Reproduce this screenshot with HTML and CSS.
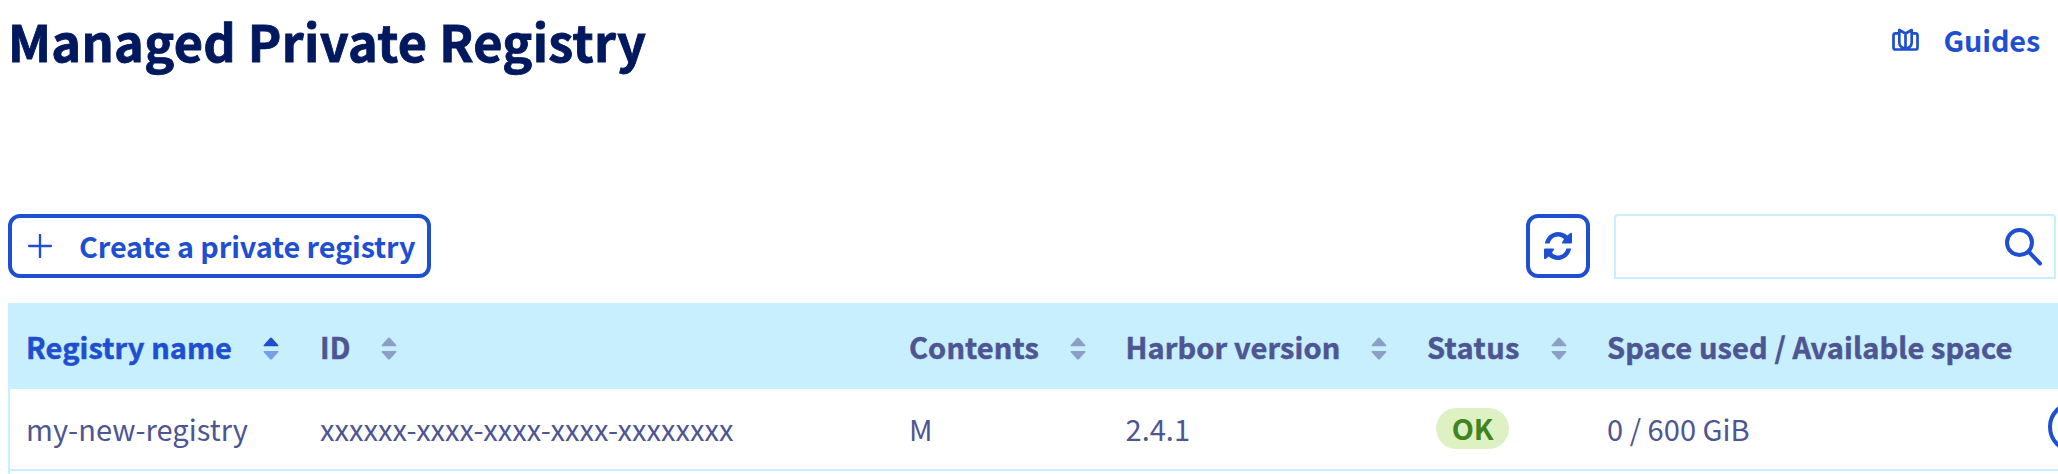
FILE: index.html
```html
<!DOCTYPE html>
<html lang="en">
<head>
<meta charset="utf-8">
<title>Managed Private Registry</title>
<link rel="stylesheet" href="styles.css">
</head>
<body>
<svg class="defs" aria-hidden="true">
  <symbol id="sort" viewBox="0 0 16 24">
    <path class="up" d="M1.2 9.3Q0 9.3 .8 8L6.8 1.2Q8 0 9.200 1.200L15.200 8Q16 9.300 14.800 9.300Z"/>
    <path class="down" d="M1.200 14Q0 14 .8 15.300L6.800 22Q8 23.200 9.200 22L15.200 15.300Q16 14 14.800 14Z"/>
  </symbol>
</svg>
<header class="page-header">
  <h1 class="title">Managed Private Registry</h1>
  <a class="guides">
    <svg class="guides-icon" viewBox="0 0 28 24"><path d="M7 5.300H3.500Q1.500 5.300 1.500 7.300V19.500Q1.500 21.500 3.500 21.500H23.500Q25.500 21.500 25.500 19.500V7.300Q25.500 5.300 23.500 5.300H20M13.500 5.500L7.300 2V14.500Q7.300 17.500 9.300 18.800L13.500 21.500L17.700 18.800Q19.700 17.500 19.700 14.500V2ZM13.500 5.500V21"/></svg>
    <span class="guides-label">Guides</span>
  </a>
</header>
<div class="toolbar">
  <button class="create">
    <svg class="plus" viewBox="0 0 24 24"><path d="M12 1V23M1 12H23"/></svg>
    <span class="create-label">Create a private registry</span>
  </button>
  <button class="refresh" aria-label="Refresh">
    <svg class="refresh-icon" viewBox="0 0 28 28"><path d="M.8 11.500C2 5 7.500 0 14 0C17.500 0 20.800 1.200 23.300 3.500L26.500 1Q28 .2 28 2V10.500Q28 11.500 27 11.500H19Q17.300 11.500 18.200 10L20 7.200C18.500 5.500 16.300 4.500 14 4.500C10 4.500 6.500 7.300 5.600 11.500Z"/><path transform="rotate(180 14 14)" d="M.8 11.500C2 5 7.500 0 14 0C17.500 0 20.800 1.200 23.300 3.500L26.500 1Q28 .2 28 2V10.500Q28 11.500 27 11.500H19Q17.300 11.500 18.200 10L20 7.200C18.500 5.500 16.300 4.500 14 4.500C10 4.500 6.500 7.300 5.600 11.500Z"/></svg>
  </button>
  <div class="search">
    <svg class="search-icon" viewBox="0 0 38 38"><circle cx="14.500" cy="14.500" r="12.500"/><path d="M23.500 23.500L35 35.500"/></svg>
  </div>
</div>
<table class="grid">
  <colgroup><col class="c-name"><col class="c-id"><col class="c-contents"><col class="c-version"><col class="c-status"><col class="c-space"><col class="c-menu"></colgroup>
  <thead>
    <tr>
      <th><div class="head active">Registry name<svg class="sort"><use href="#sort"/></svg></div></th>
      <th><div class="head">ID<svg class="sort"><use href="#sort"/></svg></div></th>
      <th><div class="head">Contents<svg class="sort"><use href="#sort"/></svg></div></th>
      <th><div class="head">Harbor version<svg class="sort"><use href="#sort"/></svg></div></th>
      <th><div class="head status">Status<svg class="sort"><use href="#sort"/></svg></div></th>
      <th><div class="head">Space used / Available space</div></th>
      <th></th>
    </tr>
  </thead>
  <tbody>
    <tr>
      <td>my-new-registry</td>
      <td>xxxxxx-xxxx-xxxx-xxxx-xxxxxxxx</td>
      <td>M</td>
      <td>2.4.1</td>
      <td><span class="badge">OK</span></td>
      <td>0 / 600 GiB</td>
      <td class="menu-cell"><div class="menu"></div></td>
    </tr>
    <tr class="next"><td colspan="7"></td></tr>
  </tbody>
</table>
</body>
</html>
```
FILE: styles.css
```css
* { box-sizing: border-box; }
html { height: 474px; overflow: hidden; }
body {
  margin: 0;
  height: 474px;
  overflow: hidden;
  background: #fff;
  color: #4d5592;
  font-family: "Noto Sans CJK JP", "Noto Sans", sans-serif;
  font-size: 28.8px;
  line-height: 40px;
}
.defs { position: absolute; width: 0; height: 0; }
.page-header {
  display: flex;
  justify-content: space-between;
  align-items: flex-start;
  height: 214px;
  padding: 0 18px 0 8px;
}
.title {
  margin: 0;
  padding-top: 6px;
  color: #00185e;
  font-size: 50.4px;
  line-height: 70px;
  font-weight: 700;
  letter-spacing: .34px;
  -webkit-text-stroke: .9px currentColor;
  white-space: nowrap;
}
.guides {
  display: flex;
  align-items: center;
  gap: 24px;
  margin-top: 20px;
  color: #1f4fd1;
  font-weight: 700;
  letter-spacing: -.15px;
}
.guides-icon { width: 28px; height: 24px; fill: none; stroke: currentColor; stroke-width: 2.7; stroke-linejoin: round; }
.toolbar { display: flex; height: 65px; padding: 0 2px 0 8px; }
.create, .refresh {
  display: flex;
  align-items: center;
  height: 64px;
  border: 4px solid #1f4fd1;
  border-radius: 12px;
  background: #fff;
  color: #1f4fd1;
  font: inherit;
  font-weight: 700;
}
.create { width: 423px; padding: 0 0 0 16px; gap: 27px; letter-spacing: -.11px; white-space: nowrap; }
.plus { width: 24px; height: 24px; flex: none; fill: none; stroke: currentColor; stroke-width: 2.4; stroke-linecap: round; }
.refresh { width: 64px; margin-left: auto; padding: 0; justify-content: center; }
.refresh-icon { width: 28px; height: 28px; fill: currentColor; }
.search {
  display: flex;
  justify-content: flex-end;
  width: 442px;
  height: 65px;
  margin-left: 24px;
  padding: 12px 11px 0 0;
  border: 2px solid #c8effe;
  border-radius: 4px 4px 0 0;
}
.search-icon { width: 38px; height: 38px; fill: none; stroke: #1f4fd1; stroke-width: 4; stroke-linecap: round; }
.grid {
  width: 2150px;
  margin: 24px 0 0 8px;
  border-collapse: separate;
  border-spacing: 0;
  border-left: 2px solid #c8effe;
  table-layout: fixed;
  font-size: 29px;
  letter-spacing: .04px;
}
.c-name { width: 294px; }
.c-id { width: 589px; }
.c-contents { width: 216.500px; }
.c-version { width: 301.500px; }
.c-status { width: 180px; }
.c-space { width: 433px; }
th {
  height: 86px;
  padding: 0 0 0 16px;
  background: #c8effe;
  text-align: left;
  font-weight: 700;
  letter-spacing: .1px;
  -webkit-text-stroke: .5px currentColor;
  white-space: nowrap;
}
td { height: 82px; padding: 0 0 2px 16px; border-bottom: 2px solid #c8effe; white-space: nowrap; }
.head { display: flex; align-items: center; gap: 31px; }
.status { letter-spacing: .4px; }
.sort { width: 16px; height: 24px; margin-top: 6px; fill: #8c9fc6; }
.active { --sort-up: #1f4fd1; color: #1f4fd1; }
.active .sort { fill: #769fe6; }
.up { fill: var(--sort-up, #8c9fc6); }
.badge {
  display: block;
  width: 73px;
  height: 41px;
  margin-left: 9px;
  border-radius: 21px;
  background: #def1c2;
  color: #41831f;
  font-size: 28.8px;
  font-weight: 700;
  letter-spacing: -.2px;
  text-align: center;
}
.menu-cell { padding-left: 24px; }
.menu { width: 52px; height: 52px; margin-top: -2px; border: 4px solid #1f4fd1; border-radius: 50%; }
.next td { height: 3px; padding: 0; border: 0; }
```
